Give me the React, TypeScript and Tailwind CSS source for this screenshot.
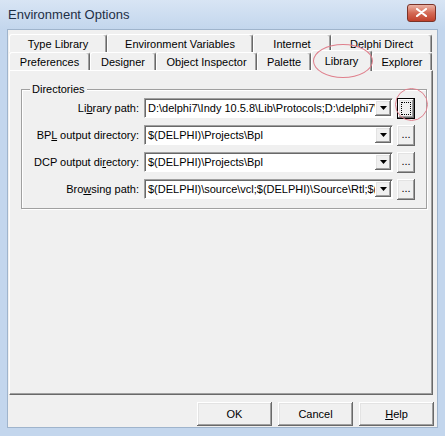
import React from 'react'

const font = { fontFamily: '"Liberation Sans", Arial, sans-serif' }

// classic raised 3D edge
const raised =
  'bg-[#f0f0f0] shadow-[inset_-1px_-1px_0_#696969,inset_1px_1px_0_#ffffff,inset_-2px_-2px_0_#a0a0a0,inset_2px_2px_0_#e3e3e3]'

function Tab({ label, w, selected }: { label: React.ReactNode; w: number; selected?: boolean }) {
  if (selected) {
    return (
      <div
        style={{ width: w }}
        className="relative z-10 -mb-[1px] flex h-[21px] items-start justify-center rounded-t-[3px] border-l border-r border-t border-l-white border-r-[#696969] border-t-white bg-[#f0f0f0] pt-[2px] shadow-[inset_-1px_0_0_#a0a0a0]"
      >
        {label}
      </div>
    )
  }
  return (
    <div
      style={{ width: w }}
      className="flex h-[18px] items-center justify-center rounded-t-[3px] border-l border-r border-t border-l-white border-r-[#696969] border-t-white bg-[#f0f0f0] pt-[1px] shadow-[inset_-1px_0_0_#a0a0a0]"
    >
      {label}
    </div>
  )
}

function Combo({ value }: { value: string }) {
  return (
    <div className="flex h-[20px] w-[249px] border border-b-white border-l-[#a0a0a0] border-r-white border-t-[#a0a0a0] bg-white shadow-[inset_1px_1px_0_#696969]">
      <div className="flex-1 overflow-hidden whitespace-nowrap pl-[3px] pt-[2px] text-[11px] leading-[14px] text-black">
        {value}
      </div>
      <div className={`my-[1px] mr-[1px] flex w-[16px] items-center justify-center ${raised}`}>
        <svg width="7" height="4" viewBox="0 0 7 4">
          <path d="M0 0h7L3.5 4z" fill="#000" />
        </svg>
      </div>
    </div>
  )
}

function Ellipsis({ focused }: { focused?: boolean }) {
  if (focused) {
    return (
      <div className="ml-[4px] flex h-[21px] w-[18px] items-center justify-center border border-black">
        <div className={`flex h-full w-full items-center justify-center ${raised}`}>
          <div className="h-[13px] w-[10px] border border-dotted border-black" />
        </div>
      </div>
    )
  }
  return (
    <div className={`ml-[4px] flex h-[21px] w-[18px] items-center justify-center pb-[2px] text-[11px] leading-none ${raised}`}>
      ...
    </div>
  )
}

function Row({ label, value, focused }: { label: React.ReactNode; value: string; focused?: boolean }) {
  return (
    <div className="flex h-[20px] items-center">
      <div className="w-[117px] whitespace-nowrap text-right text-[11px] text-black">{label}</div>
      <div className="ml-[5px]">
        <Combo value={value} />
      </div>
      <Ellipsis focused={focused} />
    </div>
  )
}

function Btn({ children }: { children: React.ReactNode }) {
  return (
    <div className={`flex h-[24px] w-[75px] items-center justify-center text-[11px] text-black ${raised}`}>
      {children}
    </div>
  )
}

export default function App() {
  return (
    <div style={font} className="relative flex h-[436px] w-[445px] flex-col overflow-hidden bg-[#c3d6ed] pb-[8px] pl-[7px] pr-[7px]">
      {/* title bar */}
      <div className="-mx-[7px] flex h-[29px] items-center bg-gradient-to-b from-[#d8e5f4] to-[#c3d6ed] pl-[8px] pr-[9px]">
        <span className="flex-1 text-[13px] text-[#1e2f45]">Environment Options</span>
        <div className="-mt-[4px] flex h-[18px] w-[29px] items-center justify-center rounded-[3px] border border-[#7a3328] bg-gradient-to-b from-[#eab3a6] via-[#d46a55] to-[#c0402b]">
          <svg width="11" height="9" viewBox="0 0 11 9">
            <path d="M1 1l9 7M10 1L1 8" stroke="#fff" strokeWidth="2.2" strokeLinecap="round" />
          </svg>
        </div>
      </div>

      {/* client */}
      <div className="flex flex-1 flex-col border border-[#9fb4cc] bg-[#f0f0f0] text-[11px]">
        <div className="ml-[1px] mt-[4px] flex">
          <Tab w={98} label="Type Library" />
          <Tab w={146} label="Environment Variables" />
          <Tab w={78} label="Internet" />
          <Tab w={101} label="Delphi Direct" />
        </div>
        <div className="ml-[1px] flex h-[18px] items-end">
          <Tab w={81} label="Preferences" />
          <Tab w={66} label="Designer" />
          <Tab w={101} label="Object Inspector" />
          <Tab w={54} label="Palette" />
          <Tab w={61} label="Library" selected />
          <Tab w={60} label="Explorer" />
        </div>

        {/* page */}
        <div className="ml-[1px] h-[325px] w-[424px] border border-b-[#696969] border-l-white border-r-[#696969] border-t-white pl-[11px] pt-[18px] shadow-[inset_-1px_-1px_0_#a0a0a0]">
          <div className="relative h-[120px] w-[406px] border border-[#a0a0a0] pb-[9px] pt-[8px] shadow-[inset_1px_1px_0_#ffffff,1px_1px_0_#ffffff]">
            <span className="absolute -top-[7px] left-[8px] bg-[#f0f0f0] px-[2px] leading-[13px] text-black">Directories</span>
            <div className="flex flex-col gap-[7px]">
              <Row
                label={<>Li<span className="underline">b</span>rary path:</>}
                value={'D:\\delphi7\\Indy 10.5.8\\Lib\\Protocols;D:\\delphi7\\Indy 10.5.8\\Lib\\Core'}
                focused
              />
              <Row
                label={<>BP<span className="underline">L</span> output directory:</>}
                value={'$(DELPHI)\\Projects\\Bpl'}
              />
              <Row
                label={<>DCP output di<span className="underline">r</span>ectory:</>}
                value={'$(DELPHI)\\Projects\\Bpl'}
              />
              <Row
                label={<>Bro<span className="underline">w</span>sing path:</>}
                value={'$(DELPHI)\\source\\vcl;$(DELPHI)\\Source\\Rtl;$(DELPHI)\\Source\\Rtl\\Common'}
              />
            </div>
          </div>
        </div>

        {/* buttons */}
        <div className="mr-[3px] mt-[7px] flex justify-end gap-[6px]">
          <Btn>OK</Btn>
          <Btn>Cancel</Btn>
          <Btn>
            <span className="underline">H</span>elp
          </Btn>
        </div>
      </div>

      {/* red annotation circles */}
      <div className="pointer-events-none absolute left-[313px] top-[44px] z-20 h-[34px] w-[60px] rounded-[50%] border border-[#df7f8c]" />
      <div className="pointer-events-none absolute left-[395px] top-[88px] z-20 h-[33px] w-[33px] rounded-[50%] border border-[#df7f8c]" />
    </div>
  )
}
